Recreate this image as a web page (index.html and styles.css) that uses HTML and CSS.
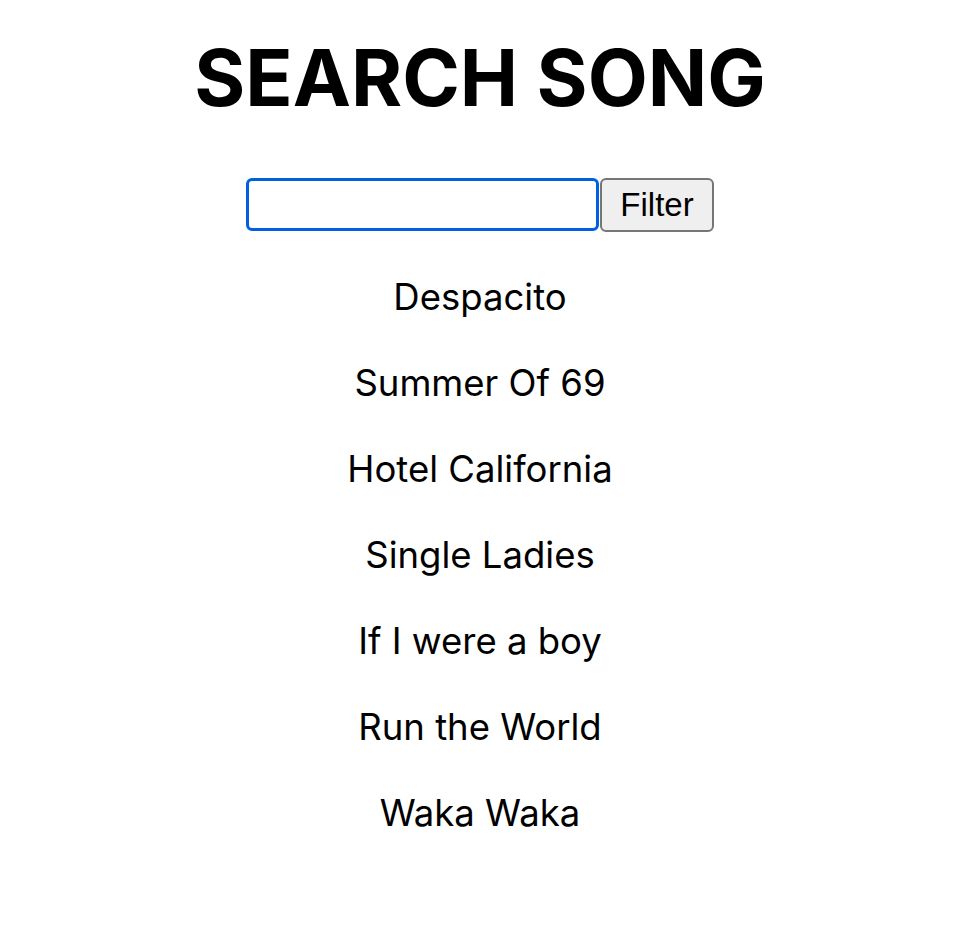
FILE: index.html
```html
<!DOCTYPE html>
<html lang="en">
<head>
<meta charset="utf-8">
<title>Search Song</title>
<link rel="stylesheet" href="styles.css">
</head>
<body>
<main class="app">
  <h1 class="title">SEARCH SONG</h1>
  <form class="search">
    <input class="search-input" type="text" aria-label="Search">
    <button class="search-button" type="button">Filter</button>
  </form>
  <ul class="songs">
    <li class="song">Despacito</li>
    <li class="song">Summer Of 69</li>
    <li class="song">Hotel California</li>
    <li class="song">Single Ladies</li>
    <li class="song">If I were a boy</li>
    <li class="song">Run the World</li>
    <li class="song">Waka Waka</li>
  </ul>
</main>
</body>
</html>
```

FILE: styles.css
```css
html, body {
  margin: 0;
  padding: 0;
  background: #ffffff;
}

body {
  font-family: Inter, "Noto Sans", sans-serif;
  color: #000000;
}

.app {
  display: flex;
  flex-direction: column;
  align-items: center;
  padding: 0 0 0 4px;
}

.title {
  margin: 31px 0 0 0;
  font-size: 78px;
  font-weight: 700;
  line-height: 94px;
  letter-spacing: 0;
}

.search {
  display: flex;
  align-items: stretch;
  margin: 53px 0 0 0;
}

.search-input {
  box-sizing: border-box;
  width: 353px;
  height: 53px;
  margin: 0;
  border: 3px solid #0060df;
  border-radius: 6px;
  background: #ffffff;
  outline: none;
  padding: 0 8px;
  font-size: 30px;
}

.search-button {
  box-sizing: border-box;
  width: 114px;
  height: 54px;
  margin: 0 0 0 1px;
  border: 2px solid #767676;
  border-radius: 6px;
  background: #efefef;
  font-family: "Liberation Sans", Arial, sans-serif;
  font-size: 33px;
  color: #000000;
  padding: 0;
}

.songs {
  list-style: none;
  margin: 46px 0 0 0;
  padding: 0;
  display: flex;
  flex-direction: column;
  align-items: center;
  gap: 47px;
}

.song {
  font-size: 36.5px;
  line-height: 39px;
}
```
